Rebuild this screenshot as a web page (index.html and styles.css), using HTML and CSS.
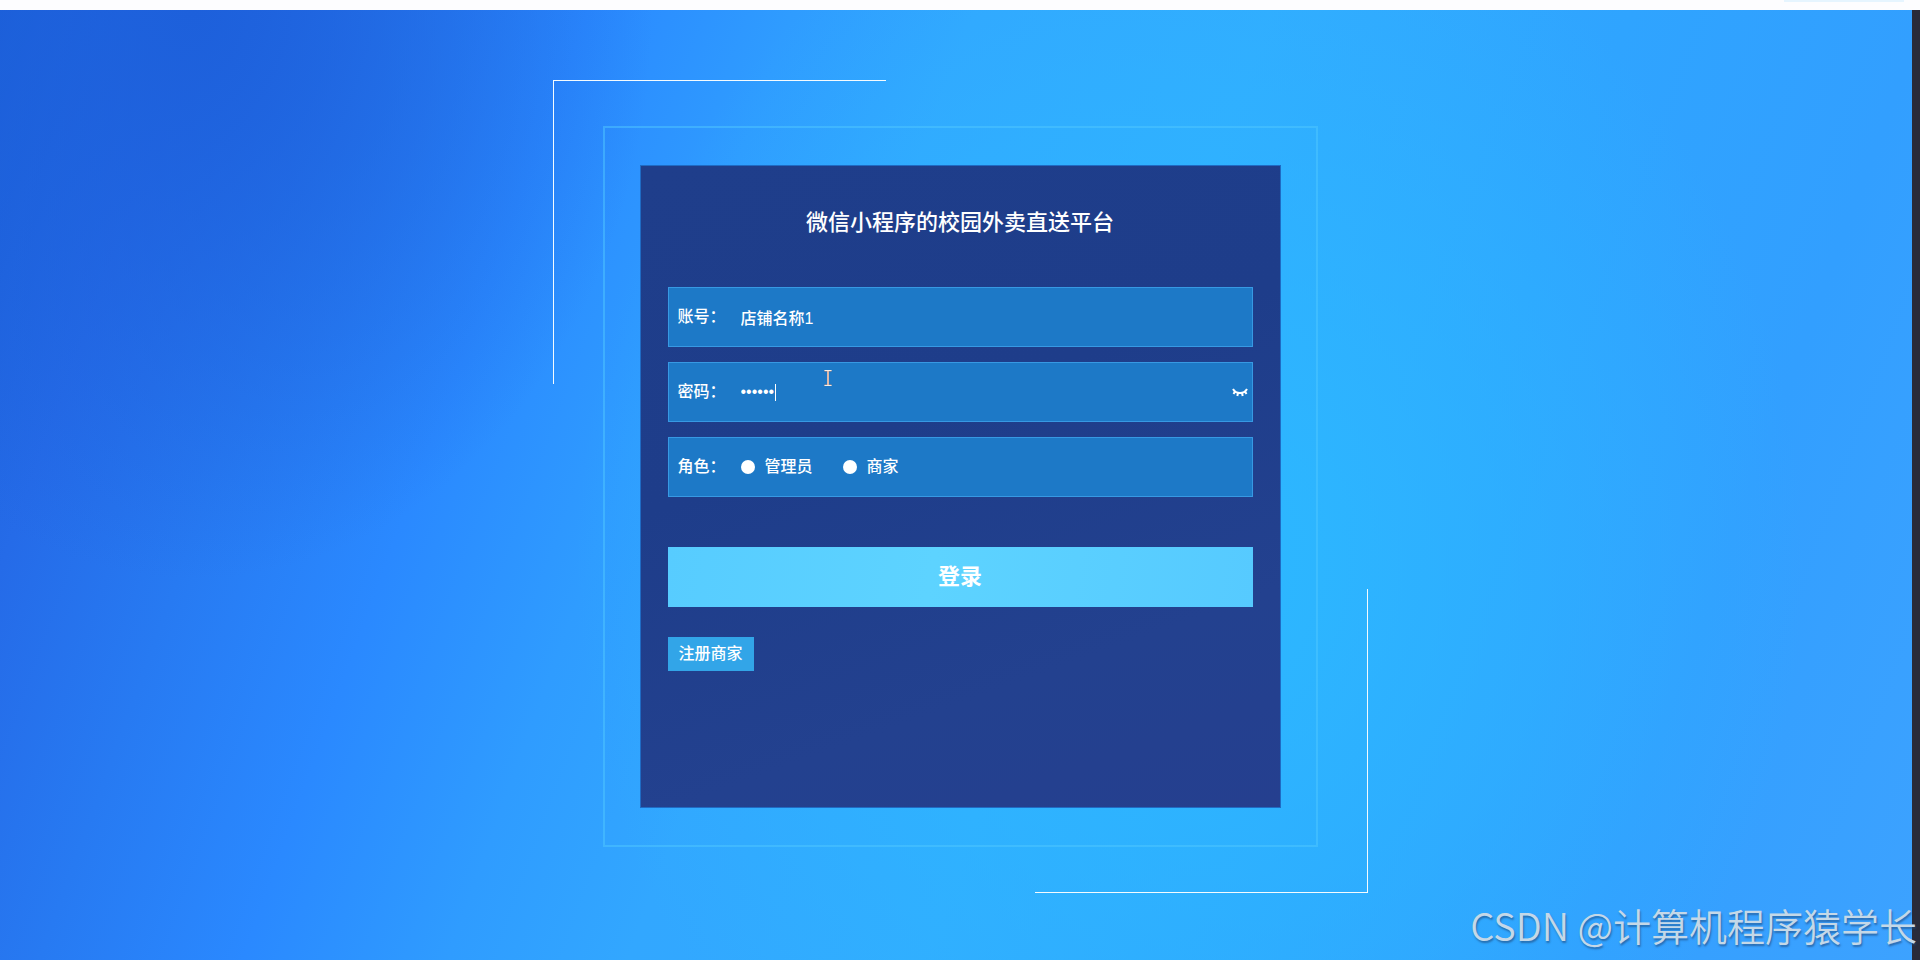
FILE: index.html
```html
<!DOCTYPE html>
<html lang="zh-CN">
<head>
<meta charset="utf-8">
<title>登录</title>
<link rel="stylesheet" href="styles.css">
</head>
<body>
<div class="topbar"><div class="topbar-tab"></div></div>
<main class="stage">
  <div class="corners">
    <div class="frame">
      <form class="panel">
        <h1 class="title">微信小程序的校园外卖直送平台</h1>
        <div class="field">
          <label class="field-label" for="account">账号：</label>
          <input class="field-input" id="account" type="text" value="店铺名称1">
        </div>
        <div class="field">
          <label class="field-label" for="password">密码：</label>
          <input class="field-input" id="password" type="password" value="123456">
          <span class="caret"></span>
          <svg class="pointer" viewBox="0 0 8 16" aria-hidden="true"><path d="M.5 .5h7M.5 15.5h7M4 .5v15" fill="none" stroke="#c48570" stroke-width="2"/><path d="M.5 .5h7M.5 15.5h7M4 .5v15" fill="none" stroke="#f4eee8"/></svg>
          <button class="eye" type="button" aria-label="显示密码">
            <svg viewBox="0 0 16 9" width="16" height="9" fill="none" stroke="#fff" stroke-width="2"><path d="M1 1C4 6.400 12 6.400 15 1M3 3.500L1.500 6M6 5L5.300 8M10 5l.7 3M13 3.500L14.500 6"/></svg>
          </button>
        </div>
        <div class="field" role="radiogroup" aria-labelledby="role">
          <span class="field-label" id="role">角色：</span>
          <label class="choice"><input class="radio" type="radio" name="role">管理员</label>
          <label class="choice"><input class="radio" type="radio" name="role">商家</label>
        </div>
        <button class="login" type="button">登录</button>
        <button class="register" type="button">注册商家</button>
      </form>
    </div>
  </div>
  <div class="edge"></div>
  <div class="watermark">CSDN @计算机程序猿学长</div>
</main>
</body>
</html>
```

FILE: styles.css
```css
* { box-sizing: border-box; }

body {
  margin: 0;
  min-height: 100vh;
  display: flex;
  flex-direction: column;
  font: 16px/24px "Liberation Sans", "Noto Sans CJK SC", sans-serif;
  color: #fff;
}

.topbar {
  height: 10px;
  background: #fdfdff;
  display: flex;
  justify-content: flex-end;
  padding-right: 16px;
}

.topbar-tab {
  width: 120px;
  height: 2px;
  background: #e6f5ff;
}

.stage {
  position: relative;
  flex: 1;
  display: flex;
  justify-content: center;
  align-items: center;
  padding: 70px 24px 67px;
  overflow: hidden;
  background:
    radial-gradient(ellipse 24% 60% at 10% 0, #1d60db, #1d60db00),
    radial-gradient(ellipse 32% 75% at 62% 58%, #2cb9ff, #2cb9ff00),
    linear-gradient(110deg, #1b5fd8 0%, #256be8 9%, #277af2 17%, #2a89ff 26%, #2f9cff 35%, #32a7ff 43%, #32abff 56%, #2fa4ff 72%, #329fff 85%, #3da2ff 100%);
}

.corners {
  position: relative;
  width: 100%;
  max-width: 815px;
  padding: 46px 50px;
}

.corners::before,
.corners::after {
  content: "";
  position: absolute;
  width: 332px;
  height: 303px;
  border: 0 solid #f4fbff;
}

.corners::before {
  left: 0;
  top: 0;
  border-width: 1px 0 0 1px;
}

.corners::after {
  right: 0;
  bottom: 0;
  border-width: 0 1px 1px 0;
}

.frame {
  border: 2px solid rgba(80, 200, 255, .5);
  padding: 37px 35px;
}

.panel {
  min-height: 643px;
  border: 1px solid #1f6bc4;
  background: linear-gradient(160deg, #1f3e8b, #1e3d8a 40%, #23418f 75%, #253f8f);
  padding: 39px 27px;
}

.title {
  margin: 0 0 46px;
  font-size: 22px;
  line-height: 36px;
  font-weight: 500;
  text-align: center;
}

.field {
  position: relative;
  display: flex;
  align-items: center;
  height: 60px;
  margin-bottom: 15px;
  padding: 0 4px 0 9px;
  border: 1px solid #3799e3;
  background: #1d79c7;
}

.field-label {
  flex: none;
  width: 63px;
  font-weight: 500;
}

.field-input {
  flex: 1;
  min-width: 0;
  height: 44px;
  padding: 0;
  border: 0;
  outline: 0;
  background: transparent;
  color: #fff;
  font: inherit;
  font-weight: 500;
}

.caret {
  position: absolute;
  left: 106px;
  top: 21px;
  width: 1px;
  height: 17px;
  background: #fff;
}

.pointer {
  position: absolute;
  left: 155px;
  top: 7px;
  width: 8px;
  height: 16px;
}

.eye {
  display: flex;
  padding: 0;
  border: 0;
  background: none;
}

.choice {
  display: flex;
  align-items: center;
  gap: 10px;
  margin-right: 30px;
  font-weight: 500;
}

.radio {
  appearance: none;
  width: 14px;
  height: 14px;
  margin: 0;
  border-radius: 50%;
  background: #fff;
}

.login {
  display: block;
  width: 100%;
  height: 60px;
  margin: 50px 0 30px;
  border: 0;
  background: linear-gradient(100deg, #57ccff, #5dd3ff 45%, #56caff);
  color: #fff;
  font: inherit;
  font-size: 22px;
  font-weight: 700;
}

.register {
  height: 34px;
  padding: 0 11px;
  border: 0;
  background: #32a5e8;
  color: #fff;
  font: inherit;
  font-weight: 500;
}

.edge {
  position: absolute;
  top: 0;
  right: 0;
  bottom: 0;
  width: 8px;
  background: #292b3a;
}

.watermark {
  position: absolute;
  right: 3px;
  bottom: 7px;
  font: 350 38px/56px "Noto Sans CJK SC", sans-serif;
  color: #c4d8e8;
  text-shadow: 1px 2px 2px rgba(30, 70, 120, .6);
}
```
